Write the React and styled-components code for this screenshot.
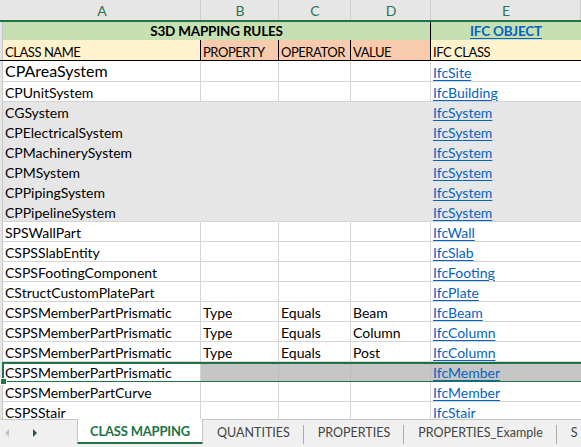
import React from "react";
import styled, { createGlobalStyle } from "styled-components";

const GlobalStyle = createGlobalStyle`
  html, body {
    margin: 0;
    padding: 0;
    background: #ffffff;
  }
  body {
    font-family: Lato, "Liberation Sans", sans-serif;
    width: 581px;
    height: 447px;
    overflow: hidden;
  }
`;

const GRID = "#d4d4d4";
const GREEN = "#217346";
const COLS = "3px 198px 78px 72px 80px 1fr";

const rows = [
  { a: "CPAreaSystem", e: "IfcSite", big: true },
  { a: "CPUnitSystem", e: "IfcBuilding" },
  { a: "CGSystem", e: "IfcSystem", fill: true },
  { a: "CPElectricalSystem", e: "IfcSystem", fill: true },
  { a: "CPMachinerySystem", e: "IfcSystem", fill: true },
  { a: "CPMSystem", e: "IfcSystem", fill: true },
  { a: "CPPipingSystem", e: "IfcSystem", fill: true },
  { a: "CPPipelineSystem", e: "IfcSystem", fill: true, last: true },
  { a: "SPSWallPart", e: "IfcWall" },
  { a: "CSPSSlabEntity", e: "IfcSlab" },
  { a: "CSPSFootingComponent", e: "IfcFooting" },
  { a: "CStructCustomPlatePart", e: "IfcPlate" },
  { a: "CSPSMemberPartPrismatic", b: "Type", c: "Equals", d: "Beam", e: "IfcBeam" },
  { a: "CSPSMemberPartPrismatic", b: "Type", c: "Equals", d: "Column", e: "IfcColumn" },
  { a: "CSPSMemberPartPrismatic", b: "Type", c: "Equals", d: "Post", e: "IfcColumn" },
  { a: "CSPSMemberPartPrismatic", e: "IfcMember", selected: true },
  { a: "CSPSMemberPartCurve", e: "IfcMember" },
  { a: "CSPSStair", e: "IfcStair" },
];

const tabs = ["QUANTITIES", "PROPERTIES", "PROPERTIES_Example", "S"];

function App() {
  return (
    <Window>
      <GlobalStyle />
      <Sheet>
        <ColHeader>
          <HeadCell />
          {["A", "B", "C", "D", "E"].map((l) => (
            <HeadCell key={l}>{l}</HeadCell>
          ))}
        </ColHeader>
        <TitleRow>
          <Strip />
          <TitleCell>S3D MAPPING RULES</TitleCell>
          <TitleCell $link>
            <span>IFC OBJECT</span>
          </TitleCell>
        </TitleRow>
        <LabelRow>
          <Strip />
          <Label $bg="#fff2cc">CLASS NAME</Label>
          <Label $bg="#f8cbad">PROPERTY</Label>
          <Label $bg="#f8cbad">OPERATOR</Label>
          <Label $bg="#f8cbad">VALUE</Label>
          <Label $bg="#fff2cc">IFC CLASS</Label>
        </LabelRow>
        {rows.map((r, i) => (
          <Row key={i} $big={r.big} $selected={r.selected}>
            <Strip />
            <Cell $fill={r.fill} $last={r.last} $big={r.big}>
              {r.a}
            </Cell>
            <Cell $fill={r.fill} $last={r.last} $sel={r.selected}>
              {r.b}
            </Cell>
            <Cell $fill={r.fill} $last={r.last} $sel={r.selected}>
              {r.c}
            </Cell>
            <Cell $fill={r.fill} $last={r.last} $sel={r.selected}>
              {r.d}
            </Cell>
            <Cell $fill={r.fill} $last={r.last} $sel={r.selected}>
              <Link>{r.e}</Link>
            </Cell>
          </Row>
        ))}
      </Sheet>
      <TabBar>
        <Nav>
          <Arrow $dir="left" />
          <Arrow $dir="right" />
        </Nav>
        <ActiveTab>CLASS MAPPING</ActiveTab>
        {tabs.map((t) => (
          <Tab key={t}>{t}</Tab>
        ))}
      </TabBar>
    </Window>
  );
}

const Window = styled.div`
  display: flex;
  flex-direction: column;
  width: 581px;
  height: 447px;
  overflow: hidden;
`;

const Sheet = styled.div`
  flex: 1;
  overflow: hidden;
  display: flex;
  flex-direction: column;
`;

const ColHeader = styled.div`
  display: grid;
  grid-template-columns: ${COLS};
  height: 20px;
  background: #e6e6e6;
  border-bottom: 2px solid ${GREEN};
  flex-shrink: 0;
`;

const HeadCell = styled.div`
  display: flex;
  align-items: center;
  justify-content: center;
  color: #2f7451;
  font-size: 14px;
  padding-top: 1px;
  box-shadow: inset -1px 0 0 #cdcdcd;
  &:first-child {
    box-shadow: none;
  }
`;

const Strip = styled.div`
  background: #e6e6e6;
  border-right: 1px solid #c8c8c8;
`;

const TitleRow = styled.div`
  display: grid;
  grid-template-columns: 3px 428px 1fr;
  height: 18px;
  background: #c6e0b4;
  flex-shrink: 0;
`;

const TitleCell = styled.div`
  display: flex;
  align-items: flex-end;
  justify-content: center;
  font-weight: 700;
  font-size: 13.5px;
  letter-spacing: -0.2px;
  line-height: 17px;
  color: ${(p) => (p.$link ? "#0563c1" : "#000")};
  border-right: ${(p) => (p.$link ? "none" : "1px solid #000")};
  span {
    text-decoration: underline;
    text-underline-offset: 2px;
  }
`;

const LabelRow = styled.div`
  display: grid;
  grid-template-columns: ${COLS};
  height: 20px;
  border-bottom: 1px solid #000;
  flex-shrink: 0;
`;

const Label = styled.div`
  background: ${(p) => p.$bg};
  border-right: 1px solid #000;
  font-size: 13px;
  letter-spacing: -0.45px;
  line-height: 18px;
  padding: 3px 0 0 2px;
  white-space: nowrap;
  overflow: hidden;
  &:last-child {
    border-right: none;
  }
`;

const Row = styled.div`
  position: relative;
  display: grid;
  grid-template-columns: ${COLS};
  height: ${(p) => (p.$big ? 21 : 20)}px;
  flex-shrink: 0;
  ${(p) =>
    p.$selected &&
    `
    &::after {
      content: "";
      position: absolute;
      left: 2px;
      right: -4px;
      top: 0;
      bottom: -1px;
      border: 2px solid ${GREEN};
      pointer-events: none;
    }
    &::before {
      content: "";
      position: absolute;
      left: 0;
      bottom: -3px;
      width: 5px;
      height: 5px;
      background: ${GREEN};
      border: 1px solid #fff;
      z-index: 2;
    }
  `}
`;

const Cell = styled.div`
  box-sizing: border-box;
  display: flex;
  align-items: flex-end;
  padding: 0 0 ${(p) => (p.$big ? 2 : 0)}px 2px;
  white-space: nowrap;
  overflow: hidden;
  font-size: ${(p) => (p.$big ? 16 : 14)}px;
  line-height: 16px;
  color: #000;
  background: ${(p) => (p.$fill ? "#e6e6e6" : p.$sel ? "#c6c6c6" : "#fff")};
  border-right: 1px solid ${(p) => (p.$fill ? "#e6e6e6" : p.$sel ? "#bdbdbd" : GRID)};
  border-bottom: 1px solid ${(p) => (p.$fill && !p.$last ? "#e6e6e6" : GRID)};
  &:last-child {
    border-right: none;
  }
`;

const Link = styled.span`
  color: #0563c1;
  text-decoration: underline;
  text-underline-offset: 2px;
`;

const TabBar = styled.div`
  display: flex;
  height: 28px;
  flex-shrink: 0;
  overflow: hidden;
  background: #f0f0f0;
  font-size: 12.5px;
`;

const Nav = styled.div`
  width: 77px;
  flex-shrink: 0;
  display: flex;
  align-items: center;
  gap: 24px;
  padding-left: 5px;
  box-sizing: border-box;
  border-top: 1px solid #c6c6c6;
`;

const Arrow = styled.span`
  width: 0;
  height: 0;
  border-top: 4px solid transparent;
  border-bottom: 4px solid transparent;
  ${(p) =>
    p.$dir === "left"
      ? "border-right: 4px solid #c3c3c3; margin-top: -2px;"
      : "border-left: 4px solid #1e5c3a; margin-top: -2px;"}
`;

const ActiveTab = styled.div`
  width: 126px;
  height: 25px;
  flex-shrink: 0;
  box-sizing: border-box;
  display: flex;
  align-items: center;
  justify-content: center;
  white-space: nowrap;
  background: #fff;
  color: ${GREEN};
  font-weight: 700;
  font-size: 13px;
  letter-spacing: -0.2px;
  border-left: 1px solid #c6c6c6;
  border-right: 1px solid #c6c6c6;
  border-bottom: 2px solid ${GREEN};
`;

const Tab = styled.div`
  position: relative;
  display: flex;
  align-items: center;
  flex-shrink: 0;
  padding: 0 14px;
  height: 25px;
  color: #444;
  white-space: nowrap;
  border-top: 1px solid #c6c6c6;
  &::after {
    content: "";
    position: absolute;
    right: 0;
    top: 5px;
    bottom: 1px;
    width: 1px;
    background: #ababab;
  }
`;

export default App;
